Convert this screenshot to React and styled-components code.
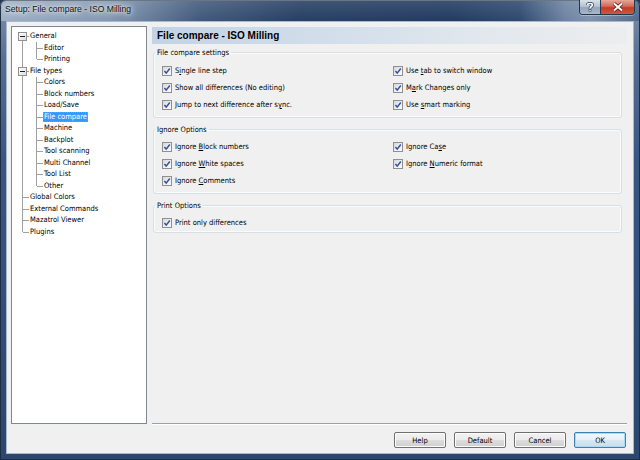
import React from "react"
import styled, { createGlobalStyle, css } from "styled-components"

const GlobalStyle = createGlobalStyle`
  html, body {
    margin: 0;
    padding: 0;
    background: #1f3656;
  }
  body {
    font-family: "DejaVu Sans Condensed", "Liberation Sans", sans-serif;
    font-size: 7.5px;
    color: #000;
  }
`

const UI_FONT = `"DejaVu Sans Condensed", "Liberation Sans", sans-serif`

const Window = styled.div`
  width: 640px;
  height: 460px;
  box-sizing: border-box;
  display: flex;
  flex-direction: column;
  padding: 0 6px 6px;
  border-radius: 6px 6px 0 0;
  box-shadow: inset 0 0 0 1px #1c2d44;
  background: linear-gradient(to bottom, #7e92ac 0px, #566f92 60px, #3a5680 160px, #2c476d 460px);
`

const TitleBar = styled.div`
  height: 21px;
  margin: 0 -6px;
  padding: 0 6px;
  display: flex;
  align-items: flex-start;
  border-radius: 6px 6px 0 0;
  box-shadow: inset 0 1px 0 rgba(255, 255, 255, 0.35), inset 1px 0 0 #1c2d44, inset -1px 0 0 #1c2d44, inset 0 1px 0 #1c2d44;
  background:
    linear-gradient(to bottom, rgba(255, 255, 255, 0.12), rgba(255, 255, 255, 0) 21px),
    linear-gradient(to right, #9fb0c4 0px, #8297b1 110px, #41597c 200px, #263f63 300px, #223b60 450px, #2f4a6f 520px, #6d83a2 565px, #8093ac 590px, #52698a 640px);
`

const TitleText = styled.span`
  margin: 4px 0 0 -1px;
  font-family: "Liberation Sans", sans-serif;
  font-size: 8.6px;
  color: #111;
  white-space: nowrap;
  text-shadow: 0 0 3px #e8eef5, 0 0 6px #e8eef5, 0 0 10px #dfe7f0;
`

const CaptionButtons = styled.div`
  margin-left: auto;
  margin-right: -1px;
  display: flex;
  height: 14px;
  border: 1px solid #26364f;
  border-top: none;
  border-radius: 0 0 4px 4px;
  overflow: hidden;
  box-shadow: 0 1px 0 rgba(255, 255, 255, 0.35);
`

const CaptionButton = styled.div`
  display: flex;
  align-items: center;
  justify-content: center;
  height: 100%;
  ${({ $close }) =>
    $close
      ? css`
          width: 33px;
          background: linear-gradient(to bottom, #e6a89a 0%, #d06a58 45%, #c13b26 55%, #cf5a40 100%);
        `
      : css`
          width: 20px;
          border-right: 1px solid #26364f;
          background: linear-gradient(to bottom, #d9e1ea 0%, #b7c3d2 45%, #94a4ba 55%, #a9b8cb 100%);
        `}
`

const Client = styled.div`
  flex: 1;
  display: flex;
  flex-direction: column;
  background: #f0f0f0;
  border: 1px solid #a9b8ca;
  padding: 4px 6px 5px 4px;
  font-family: ${UI_FONT};
  font-size: 7.5px;
`

const Body = styled.div`
  height: 398px;
  display: flex;
  gap: 5px;
`

const Tree = styled.div`
  width: 136px;
  flex-shrink: 0;
  box-sizing: border-box;
  border: 1px solid #828790;
  background: #fff;
  padding-top: 3.5px;
`

const TreeRow = styled.div`
  height: 11.5px;
  display: flex;
  align-items: center;
`

const Lane = styled.span`
  position: relative;
  width: 14px;
  height: 100%;
  flex-shrink: 0;

  &::before {
    content: "";
    display: ${({ $v }) => ($v ? "block" : "none")};
    position: absolute;
    left: 10px;
    top: ${({ $v }) => ($v === "bottom" ? "50%" : "0")};
    bottom: ${({ $v }) => ($v === "top" ? "50%" : "0")};
    border-left: 1px solid #a0a0a0;
  }

  &::after {
    content: "";
    display: ${({ $h }) => ($h ? "block" : "none")};
    position: absolute;
    left: 11px;
    width: 6px;
    top: 50%;
    border-top: 1px solid #a0a0a0;
  }
`

const ExpandBox = styled.span`
  position: absolute;
  z-index: 1;
  left: 6px;
  top: 50%;
  margin-top: -4px;
  width: 9px;
  height: 9px;
  box-sizing: border-box;
  border: 1px solid #919191;
  background: linear-gradient(135deg, #ffffff, #dedede);

  &::after {
    content: "";
    position: absolute;
    left: 1px;
    right: 1px;
    top: 3px;
    height: 1px;
    background: #1e1e1e;
  }
`

const NodeLabel = styled.span`
  margin-left: 3px;
  padding: 0 1px;
  line-height: 10.5px;
  white-space: nowrap;
  ${({ $selected }) =>
    $selected &&
    css`
      background: #3399ff;
      color: #fff;
      outline: 1px dotted #d68a3a;
      outline-offset: -1px;
    `}
`

const Panel = styled.div`
  flex: 1;
  display: flex;
  flex-direction: column;
  border-bottom: 1px solid #a0a0a0;
  box-shadow: 0 1px 0 #fff;
`

const PanelHeader = styled.div`
  margin-top: 1px;
  height: 17px;
  padding-left: 5px;
  display: flex;
  align-items: center;
  background: linear-gradient(to right, #c2d3e6 0%, #d3dfeb 40%, #e4e9ee 75%, #ecedee 100%);
  font-family: "Liberation Sans", sans-serif;
  font-weight: bold;
  font-size: 10px;
`

const Group = styled.fieldset`
  margin: 3px 5px 0 1px;
  padding: 0;
  min-width: 0;
  border: 1px solid #d5dfe5;
  border-radius: 3px;
  box-shadow: inset 0 0 0 1px #fafbfb;

  & + & {
    margin-top: 6px;
  }
`

const Legend = styled.legend`
  margin-left: 1px;
  padding: 0 2px;
  line-height: 11px;
`

const OptionGrid = styled.div`
  display: grid;
  grid-template-columns: 231px 1fr;
  grid-auto-rows: 17px;
  padding: ${({ $pt }) => $pt}px 0 ${({ $pb }) => $pb}px 8px;
`

const CheckRow = styled.label`
  display: flex;
  align-items: center;
  gap: 3px;
  white-space: nowrap;
`

const CheckBox = styled.span`
  width: 8px;
  height: 8px;
  flex-shrink: 0;
  border: 1px solid #8e8f8f;
  background: linear-gradient(135deg, #d6d6d6 0%, #efefef 55%, #fbfbfb 100%);
  display: flex;
  align-items: center;
  justify-content: center;
`

const ButtonRow = styled.div`
  margin-top: 8px;
  padding-right: 1px;
  display: flex;
  justify-content: flex-end;
  gap: 8px;
`

const Button = styled.button`
  width: 52px;
  height: 16px;
  box-sizing: border-box;
  padding: 0;
  border: 1px solid #707070;
  border-radius: 2px;
  font-family: ${UI_FONT};
  font-size: 7.5px;
  color: #000;
  background: linear-gradient(to bottom, #f2f2f2 0%, #ebebeb 50%, #dddddd 51%, #cfcfcf 100%);
  box-shadow: inset 0 0 0 1px #fcfcfc;
  ${({ $primary }) =>
    $primary &&
    css`
      border-color: #3c7fb1;
      background: linear-gradient(to bottom, #f1f7fc 0%, #e6f0f8 50%, #d7e6f2 51%, #cadeee 100%);
      box-shadow: inset 0 0 0 1px #a8dcf5;
    `}
`

const Check = ({ children }) => (
  <CheckRow>
    <CheckBox>
      <svg width="8" height="8" viewBox="0 0 8 8">
        <path d="M1.4 4.1 L3.2 6.1 L6.8 1.5" fill="none" stroke="#3350a8" strokeWidth="1.5" />
      </svg>
    </CheckBox>
    <span>{children}</span>
  </CheckRow>
)

const tree = [
  { label: "General", level: 0, box: true, first: true },
  { label: "Editor", level: 1 },
  { label: "Printing", level: 1, last: true },
  { label: "File types", level: 0, box: true },
  { label: "Colors", level: 1 },
  { label: "Block numbers", level: 1 },
  { label: "Load/Save", level: 1 },
  { label: "File compare", level: 1, selected: true },
  { label: "Machine", level: 1 },
  { label: "Backplot", level: 1 },
  { label: "Tool scanning", level: 1 },
  { label: "Multi Channel", level: 1 },
  { label: "Tool List", level: 1 },
  { label: "Other", level: 1, last: true },
  { label: "Global Colors", level: 0 },
  { label: "External Commands", level: 0 },
  { label: "Mazatrol Viewer", level: 0 },
  { label: "Plugins", level: 0, last: true },
]

const TreeNode = ({ label, level, box, first, last, selected }) => {
  const own = first ? "bottom" : last ? "top" : "full"
  return (
    <TreeRow>
      {level === 0 ? (
        <Lane $v={own} $h>
          {box && <ExpandBox />}
        </Lane>
      ) : (
        <>
          <Lane $v="full" />
          <Lane $v={own} $h />
        </>
      )}
      <NodeLabel $selected={selected}>{label}</NodeLabel>
    </TreeRow>
  )
}

export default function App() {
  return (
    <>
      <GlobalStyle />
      <Window>
        <TitleBar>
          <TitleText>Setup: File compare - ISO Milling</TitleText>
          <CaptionButtons>
            <CaptionButton>
              <svg width="8" height="10" viewBox="0 0 8 10">
                <path
                  d="M1.5 3 C1.5 1 6.5 1 6.5 3 C6.5 4.5 4 4.6 4 6.4"
                  fill="none"
                  stroke="#2b3a52"
                  strokeWidth="3"
                />
                <path
                  d="M1.5 3 C1.5 1 6.5 1 6.5 3 C6.5 4.5 4 4.6 4 6.4"
                  fill="none"
                  stroke="#fff"
                  strokeWidth="1.6"
                />
                <rect x="3" y="7.6" width="2" height="2" fill="#fff" stroke="#2b3a52" strokeWidth="0.6" />
              </svg>
            </CaptionButton>
            <CaptionButton $close>
              <svg width="12" height="10" viewBox="0 0 12 10">
                <path d="M2 1.5 L10 8.5 M10 1.5 L2 8.5" stroke="#5a1a12" strokeWidth="3.6" />
                <path d="M2 1.5 L10 8.5 M10 1.5 L2 8.5" stroke="#fff" strokeWidth="2" />
              </svg>
            </CaptionButton>
          </CaptionButtons>
        </TitleBar>
        <Client>
          <Body>
            <Tree>
              {tree.map((n) => (
                <TreeNode key={n.label} {...n} />
              ))}
            </Tree>
            <Panel>
              <PanelHeader>File compare - ISO Milling</PanelHeader>
              <Group>
                <Legend>File compare settings</Legend>
                <OptionGrid $pt={4} $pb={4}>
                  <Check>S<u>i</u>ngle line step</Check>
                  <Check>Use <u>t</u>ab to switch window</Check>
                  <Check>Show all differences (No editing)</Check>
                  <Check>M<u>a</u>rk Changes only</Check>
                  <Check>Jump to next difference after s<u>y</u>nc.</Check>
                  <Check>Use <u>s</u>mart marking</Check>
                </OptionGrid>
              </Group>
              <Group>
                <Legend>Ignore Options</Legend>
                <OptionGrid $pt={3} $pb={4}>
                  <Check>Ignore <u>B</u>lock numbers</Check>
                  <Check>Ignore Ca<u>s</u>e</Check>
                  <Check>Ignore <u>W</u>hite spaces</Check>
                  <Check>Ignore <u>N</u>umeric format</Check>
                  <Check>Ignore <u>C</u>omments</Check>
                </OptionGrid>
              </Group>
              <Group>
                <Legend>Print Options</Legend>
                <OptionGrid $pt={3} $pb={1}>
                  <Check>Print only differences</Check>
                </OptionGrid>
              </Group>
            </Panel>
          </Body>
          <ButtonRow>
            <Button>Help</Button>
            <Button>Default</Button>
            <Button>Cancel</Button>
            <Button $primary>OK</Button>
          </ButtonRow>
        </Client>
      </Window>
    </>
  )
}
